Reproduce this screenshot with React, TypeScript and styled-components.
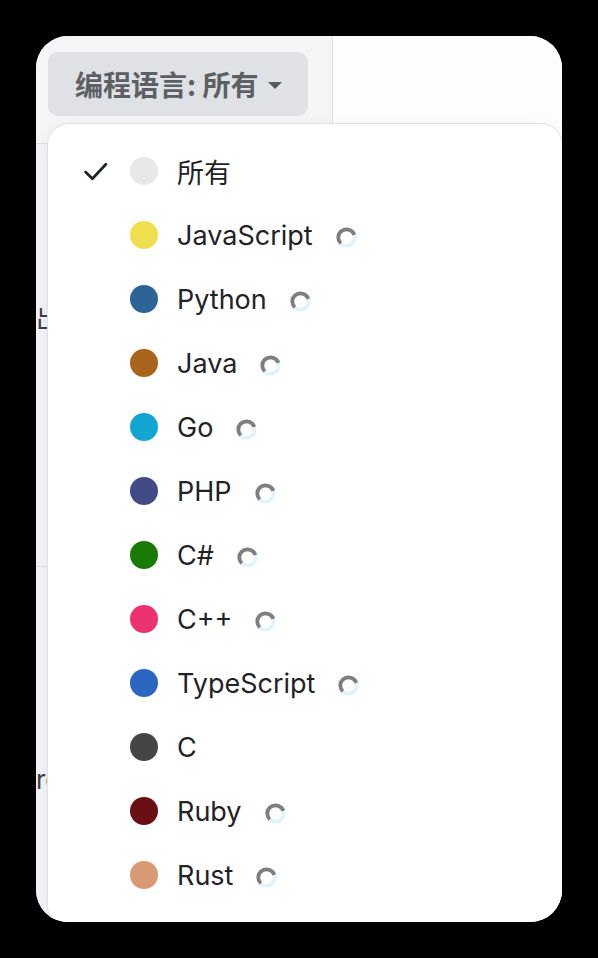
import styled, { createGlobalStyle } from 'styled-components';

const GlobalStyle = createGlobalStyle`
	html, body {
		margin: 0;
		padding: 0;
		background: #000;
	}
	body {
		font-family: Inter, "Noto Sans CJK SC", sans-serif;
	}
`

interface Language {
	name: string;
	color: string;
	loading: boolean;
}

const languages: Language[] = [
	{ name: '所有', color: '#e8e8e8', loading: false },
	{ name: 'JavaScript', color: '#efdf4f', loading: true },
	{ name: 'Python', color: '#2e6398', loading: true },
	{ name: 'Java', color: '#a8641a', loading: true },
	{ name: 'Go', color: '#14a6d3', loading: true },
	{ name: 'PHP', color: '#424b87', loading: true },
	{ name: 'C#', color: '#1a7a06', loading: true },
	{ name: 'C++', color: '#ec3370', loading: true },
	{ name: 'TypeScript', color: '#2b66c0', loading: true },
	{ name: 'C', color: '#454545', loading: false },
	{ name: 'Ruby', color: '#6a1014', loading: true },
	{ name: 'Rust', color: '#d99a73', loading: true },
];

const Spinner = () => (
	<SpinnerSvg viewBox="0 0 20 20">
		<circle cx="10" cy="10" r="7.8" fill="none" stroke="#e0f3f8" strokeWidth="3.6" />
		<circle
			cx="10" cy="10" r="7.8" fill="none" stroke="#7e7e7e" strokeWidth="3.6"
			strokeDasharray="28 49" transform="rotate(135 10 10)" />
	</SpinnerSvg>
)

const Check = () => (
	<CheckSvg viewBox="0 0 24 24">
		<path d="M2.5 12.5 L9 19 L22 5" fill="none" stroke="#1f2328" strokeWidth="2.6" strokeLinecap="round" strokeLinejoin="round" />
	</CheckSvg>
)

export default function App() {
	return (
		<>
			<GlobalStyle />
			<Window>
				<Header>
					<FilterBar>
						<FilterButton>
							编程语言: 所有
							<Caret />
						</FilterButton>
					</FilterBar>
					<HeaderRest />
				</Header>
				<Body>
					<Section $height={422}>
						<BehindText $top={160}>出售</BehindText>
					</Section>
					<Section $height={400}>
						<BehindText $top={198}>re</BehindText>
					</Section>
				</Body>

				<Menu>
					{languages.map((lang, index) => (
						<Option key={lang.name}>
							<CheckSlot>{index === 0 && <Check />}</CheckSlot>
							<Dot $color={lang.color} />
							<Label>{lang.name}</Label>
							{lang.loading && <Spinner />}
						</Option>
					))}
				</Menu>
			</Window>
		</>
	)
}

const Window = styled.div`
	position: relative;
	margin: 36px 0 0 36px;
	width: 526px;
	height: 886px;
	border-radius: 32px;
	overflow: hidden;
	background: #f6f7f9;
`

const Header = styled.div`
	display: flex;
	height: 107px;
	border-bottom: 1px solid #dcdee2;
`

const FilterBar = styled.div`
	box-sizing: border-box;
	width: 297px;
	padding: 16px 0 0 12px;
	border-right: 1px solid #dcdee2;
	background: #f4f5f7;
`

const HeaderRest = styled.div`
	flex: 1;
	background: #fdfdfd;
`

const FilterButton = styled.div`
	display: inline-flex;
	align-items: center;
	gap: 10px;
	height: 64px;
	padding: 0 26px 0 27px;
	box-sizing: border-box;
	border-radius: 10px;
	background: #dfe1e4;
	color: #5c6065;
	font-family: "Noto Sans CJK SC", sans-serif;
	font-size: 28px;
	font-weight: 700;
	white-space: nowrap;
`

const Caret = styled.span`
	width: 0;
	height: 0;
	border-left: 7px solid transparent;
	border-right: 7px solid transparent;
	border-top: 7px solid #55595e;
	margin-top: 2px;
`

const Body = styled.div`
	display: flex;
	flex-direction: column;
`

const Section = styled.div<{ $height: number }>`
	height: ${p => p.$height}px;
	border-bottom: 1px solid #dcdee2;
	background: #f3f4f6;
`

const BehindText = styled.div<{ $top: number }>`
	margin: ${p => p.$top}px 0 0 0;
	font-family: Inter, "Noto Sans CJK SC", sans-serif;
	font-size: 26px;
	line-height: 30px;
	color: #3c3f43;
`

const Menu = styled.div`
	position: absolute;
	top: 87px;
	left: 11px;
	width: 514px;
	padding: 15px 0 20px;
	border: 1px solid #dfe1e5;
	border-radius: 22px;
	background: #fff;
	box-shadow: 0 6px 20px rgba(0, 0, 0, 0.06);
`

const Option = styled.div`
	display: flex;
	align-items: center;
	height: 64px;
	padding-left: 35px;
`

const CheckSlot = styled.div`
	width: 47px;
	display: flex;
	align-items: center;
`

const CheckSvg = styled.svg`
	width: 25px;
	height: 25px;
`

const Dot = styled.span<{ $color: string }>`
	width: 28px;
	height: 28px;
	border-radius: 50%;
	background: ${p => p.$color};
	flex-shrink: 0;
`

const Label = styled.span`
	margin-left: 19px;
	font-family: Inter, "Noto Sans CJK SC", sans-serif;
	font-size: 27px;
	color: #1f2328;
`

const SpinnerSvg = styled.svg`
	width: 21px;
	height: 21px;
	margin-left: 23px;
	margin-top: 4px;
`
